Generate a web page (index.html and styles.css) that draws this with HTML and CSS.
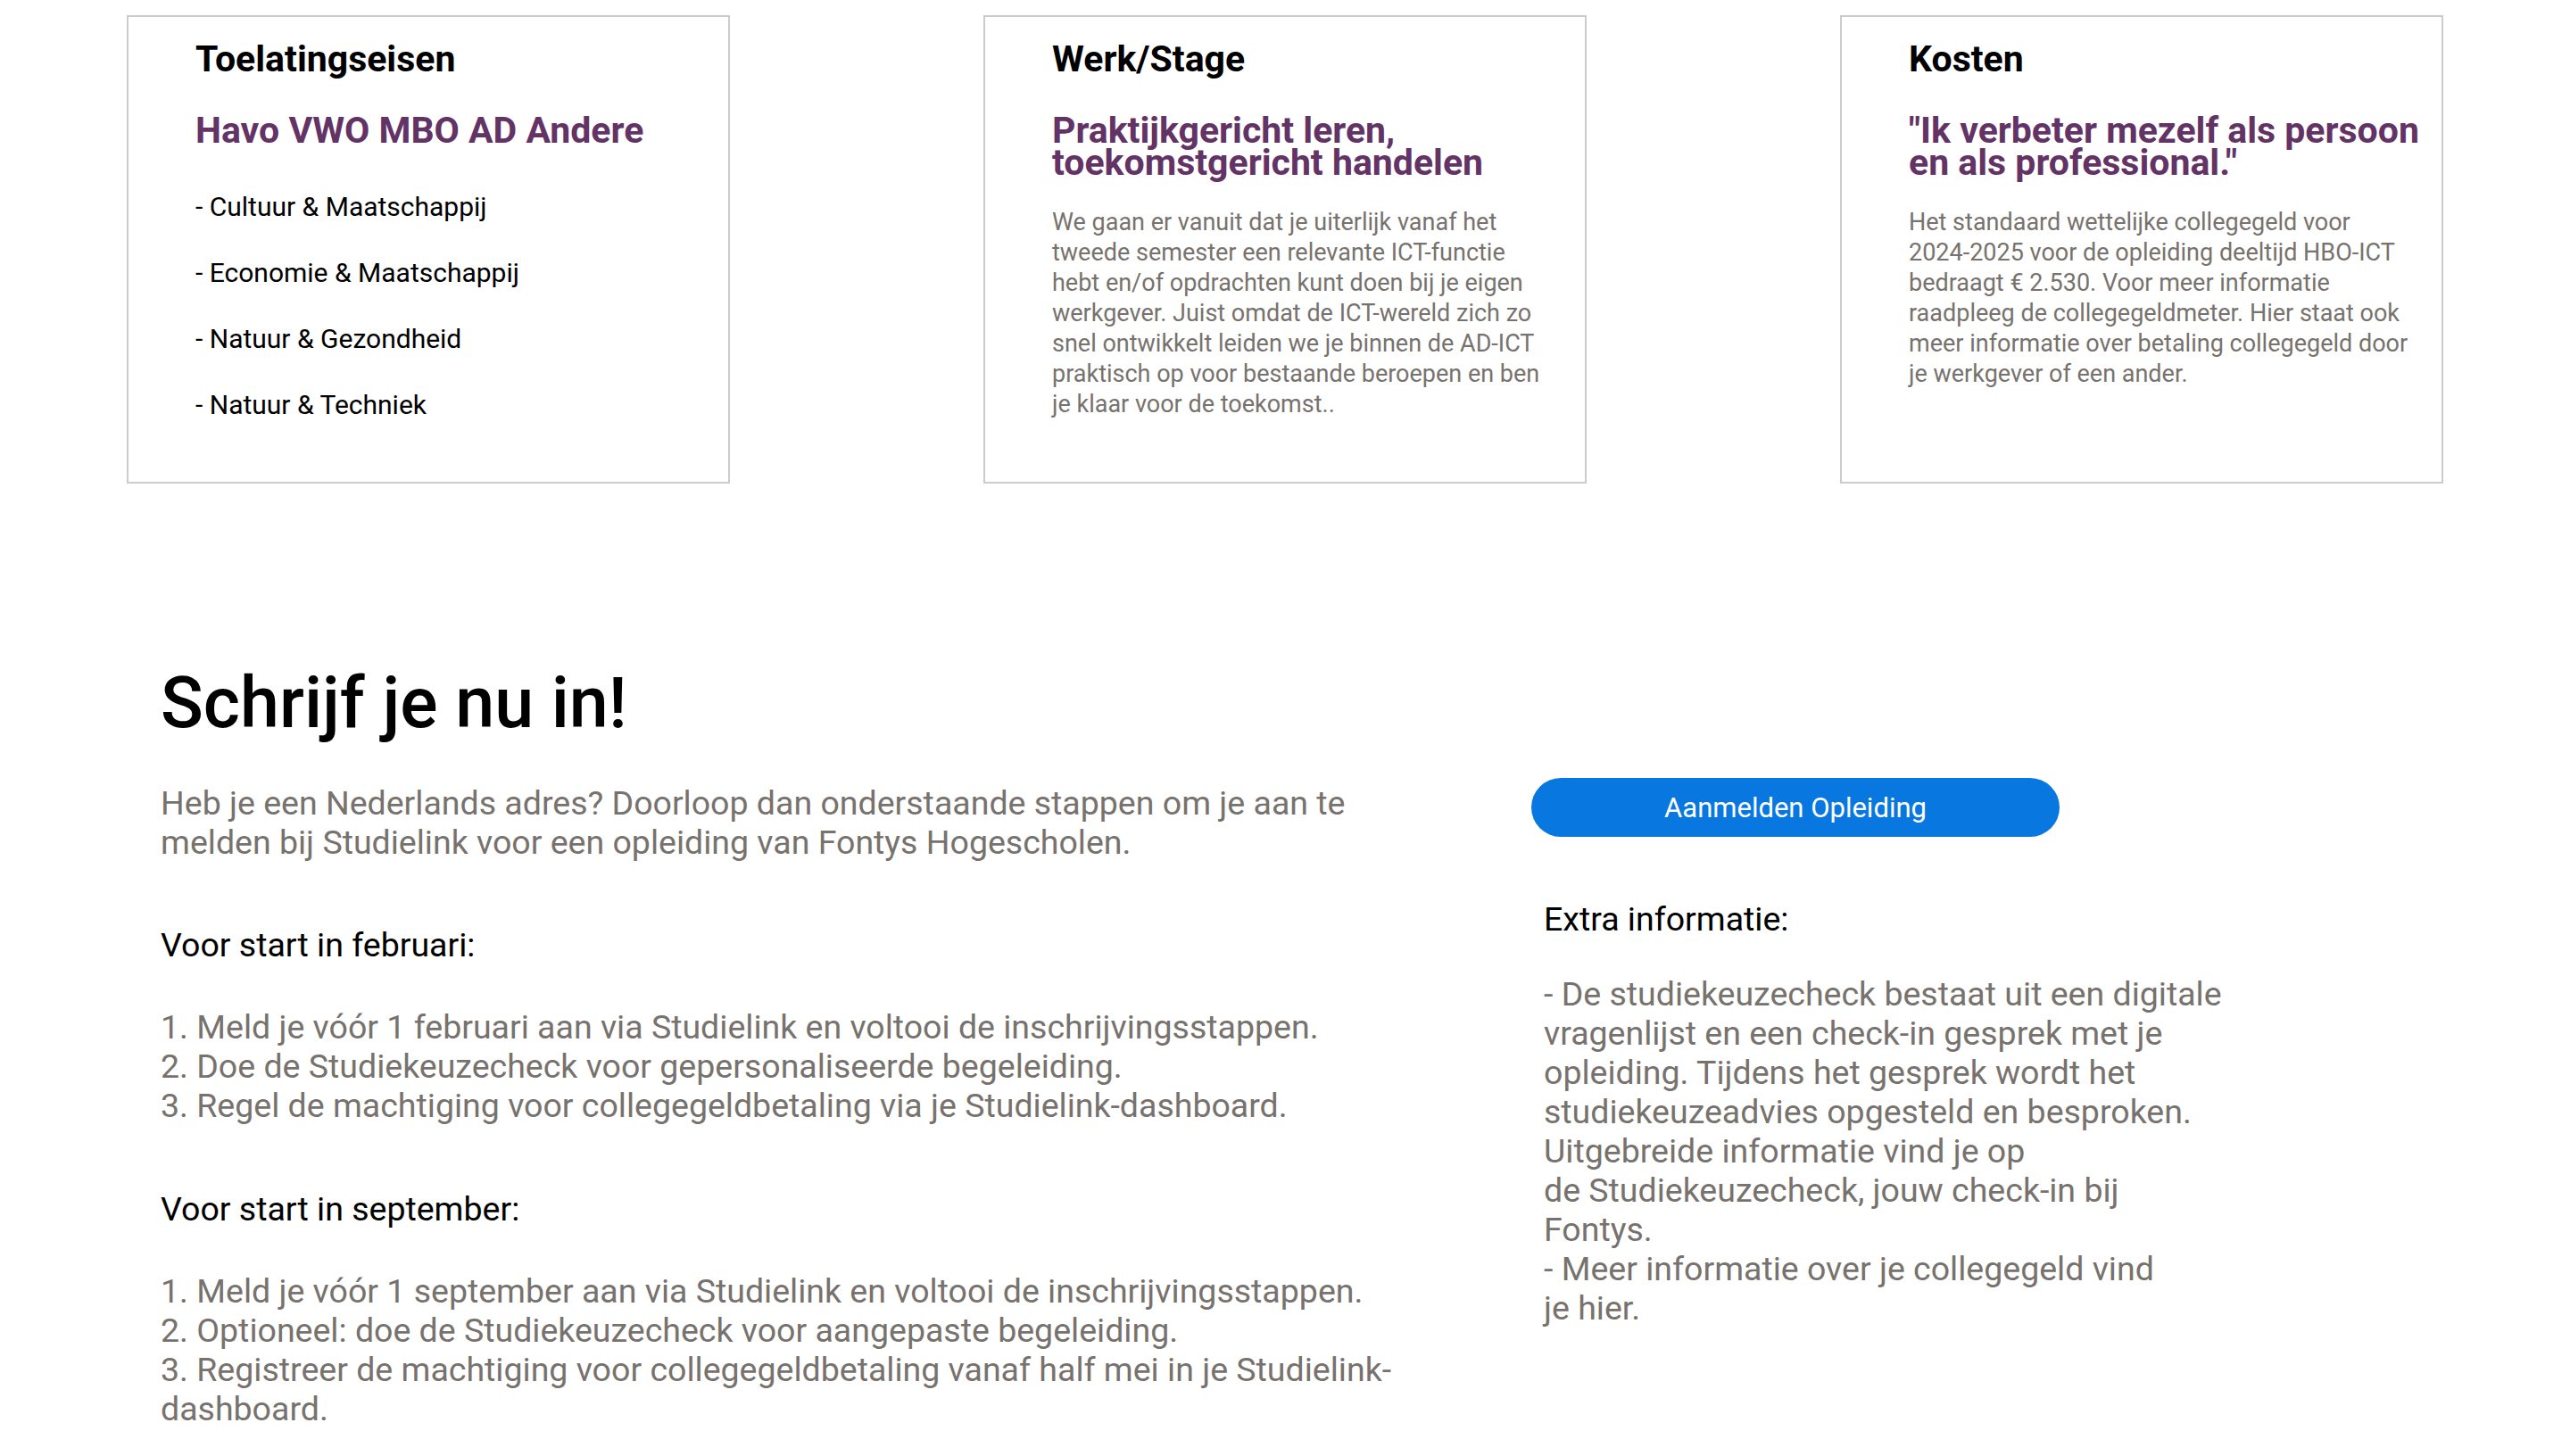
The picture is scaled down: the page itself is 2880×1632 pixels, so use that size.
FILE: index.html
```html
<!DOCTYPE html>
<html lang="nl">
<head>
<meta charset="utf-8">
<title>Schrijf je nu in</title>
<link rel="stylesheet" href="styles.css">
</head>
<body>
<section class="cards">
  <div class="col">
    <div class="card">
      <h3 class="card-title">Toelatingseisen</h3>
      <h4 class="card-sub">Havo VWO MBO AD Andere</h4>
      <p class="req">- Cultuur &amp; Maatschappij</p>
      <p class="req">- Economie &amp; Maatschappij</p>
      <p class="req">- Natuur &amp; Gezondheid</p>
      <p class="req">- Natuur &amp; Techniek</p>
    </div>
  </div>
  <div class="col">
    <div class="card">
      <h3 class="card-title">Werk/Stage</h3>
      <h4 class="card-sub">Praktijkgericht leren, toekomstgericht handelen</h4>
      <p class="card-text">We gaan er vanuit dat je uiterlijk vanaf het tweede semester een relevante ICT-functie hebt en/of opdrachten kunt doen bij je eigen werkgever. Juist omdat de ICT-wereld zich zo snel ontwikkelt leiden we je binnen de AD-ICT praktisch op voor bestaande beroepen en ben je klaar voor de toekomst..</p>
    </div>
  </div>
  <div class="col">
    <div class="card">
      <h3 class="card-title">Kosten</h3>
      <h4 class="card-sub">"Ik verbeter mezelf als persoon en als professional."</h4>
      <p class="card-text">Het standaard wettelijke collegegeld voor 2024-2025 voor de opleiding deeltijd HBO-ICT bedraagt € 2.530. Voor meer informatie raadpleeg de collegegeldmeter. Hier staat ook meer informatie over betaling collegegeld door je werkgever of een ander.</p>
    </div>
  </div>
</section>

<section class="signup">
  <div class="signup-main">
    <h2 class="signup-title">Schrijf je nu in!</h2>
    <p class="lead">Heb je een Nederlands adres? Doorloop dan onderstaande stappen om je aan te melden bij Studielink voor een opleiding van Fontys Hogescholen.</p>
    <p class="step-head">Voor start in februari:</p>
    <p class="steps">1. Meld je vóór 1 februari aan via Studielink en voltooi de inschrijvingsstappen.<br>2. Doe de Studiekeuzecheck voor gepersonaliseerde begeleiding.<br>3. Regel de machtiging voor collegegeldbetaling via je Studielink-dashboard.</p>
    <p class="step-head">Voor start in september:</p>
    <p class="steps">1. Meld je vóór 1 september aan via Studielink en voltooi de inschrijvingsstappen.<br>2. Optioneel: doe de Studiekeuzecheck voor aangepaste begeleiding.<br>3. Registreer de machtiging voor collegegeldbetaling vanaf half mei in je Studielink-dashboard.</p>
  </div>
  <aside class="signup-side">
    <a class="btn" href="#">Aanmelden Opleiding</a>
    <div class="extra">
      <p class="extra-head">Extra informatie:</p>
      <p class="extra-text">- De studiekeuzecheck bestaat uit een digitale<br>vragenlijst en een check-in gesprek met je<br>opleiding. Tijdens het gesprek wordt het<br>studiekeuzeadvies opgesteld en besproken.<br>Uitgebreide informatie vind je op<br>de Studiekeuzecheck, jouw check-in bij<br>Fontys.<br>- Meer informatie over je collegegeld vind<br>je hier.</p>
    </div>
  </aside>
</section>
</body>
</html>
```

FILE: styles.css
```css
* { box-sizing: border-box; }

html, body {
  margin: 0;
  padding: 0;
  background: #ffffff;
}

body {
  font-family: Roboto, "Liberation Sans", Arial, sans-serif;
  color: #000000;
  width: 2880px;
}

p, h2, h3, h4 { margin: 0; }

/* ---------- cards ---------- */
.cards {
  display: grid;
  grid-template-columns: repeat(3, 1fr);
  padding-top: 17px;
}

.col {
  display: flex;
  justify-content: center;
}

.card {
  width: 676px;
  height: 525px;
  border: 2px solid #cccccc;
  padding: 23px 20px 0 75px;
}

.card-title {
  font-size: 41px;
  line-height: 48px;
  font-weight: 700;
  color: #000000;
}

.card-sub {
  margin-top: 38px;
  font-size: 41px;
  line-height: 36px;
  font-weight: 700;
  color: #633366;
}

.req {
  font-size: 30px;
  line-height: 42px;
  margin-top: 32px;
}

.card-sub + .req { margin-top: 47px; }

.card-text {
  max-width: 561px;
  margin-top: 32px;
  font-size: 27px;
  line-height: 34px;
  color: #77726d;
}

/* ---------- signup ---------- */
.signup {
  display: grid;
  grid-template-columns: 1400px 1fr;
  column-gap: 136px;
  padding: 200px 0 0 180px;
}

.signup-title {
  font-size: 79px;
  line-height: 92px;
  font-weight: 500;
  color: #000000;
}

.lead {
  margin-top: 44px;
  font-size: 37.5px;
  line-height: 44px;
  color: #77726d;
}

.step-head {
  margin-top: 71px;
  font-size: 37.5px;
  line-height: 44px;
  color: #000000;
}

.steps {
  margin-top: 48px;
  font-size: 37.5px;
  line-height: 44px;
  color: #77726d;
}

.steps + .step-head { margin-top: 72px; }

.signup-side {
  padding-top: 130px;
}

.btn {
  display: flex;
  align-items: center;
  justify-content: center;
  width: 592px;
  height: 66px;
  border-radius: 33px;
  background: #0877df;
  color: #ffffff;
  text-decoration: none;
  font-size: 31px;
}

.extra {
  padding-left: 14px;
}

.extra-head {
  margin-top: 70px;
  font-size: 37.5px;
  line-height: 44px;
  color: #000000;
}

.extra-text {
  margin-top: 40px;
  font-size: 37.5px;
  line-height: 44px;
  color: #77726d;
}
```
